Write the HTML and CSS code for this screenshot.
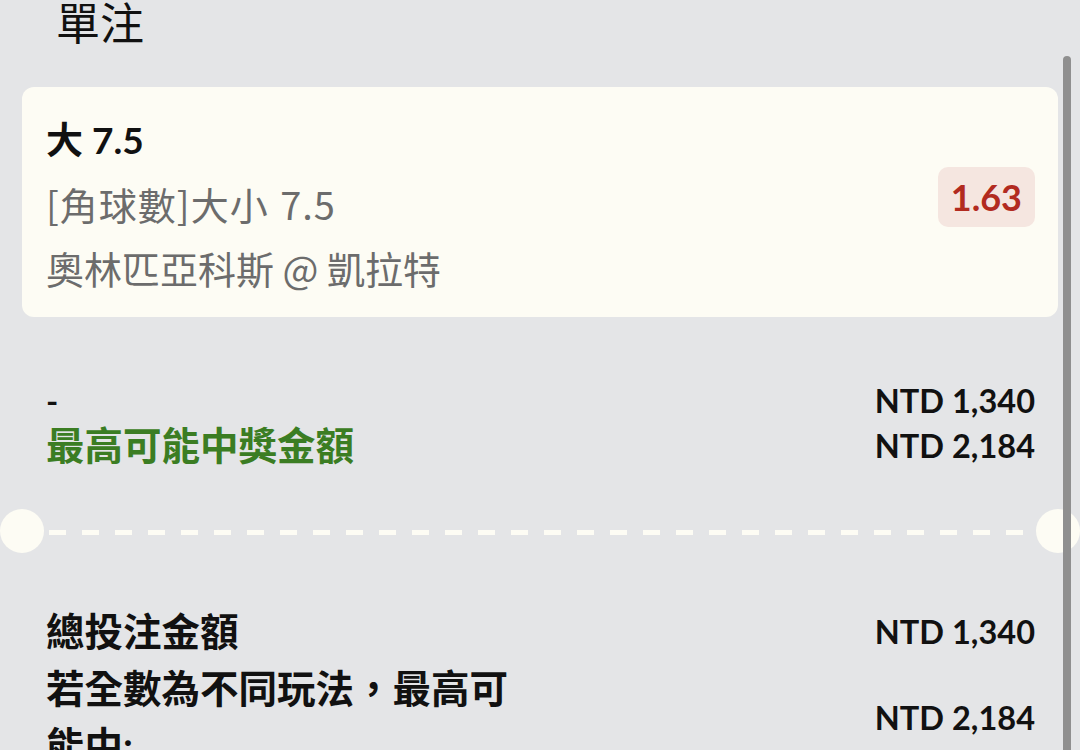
FILE: index.html
```html
<!DOCTYPE html>
<html lang="zh-Hant">
<head>
<meta charset="utf-8">
<link rel="stylesheet" href="styles.css">
</head>
<body>
<div class="page">
  <h1 class="title">單注</h1>
  <div class="card">
    <div class="card-text">
      <div class="pick">大 7.5</div>
      <div class="market">[角球數]大小 7.5</div>
      <div class="match">奧林匹亞科斯 @ 凱拉特</div>
    </div>
    <div class="odds">1.63</div>
  </div>
  <div class="stake-row">
    <div class="stake-labels">
      <div class="dash-label">-</div>
      <div class="win-label">最高可能中獎金額</div>
    </div>
    <div class="amounts">
      <div>NTD 1,340</div>
      <div>NTD 2,184</div>
    </div>
  </div>
  <div class="separator">
    <span class="notch"></span>
    <span class="dashes"></span>
    <span class="notch"></span>
  </div>
  <div class="summary">
    <div class="sum-row">
      <div class="sum-label">總投注金額</div>
      <div class="sum-amount">NTD 1,340</div>
    </div>
    <div class="sum-row">
      <div class="sum-label wrap">若全數為不同玩法，最高可能中:</div>
      <div class="sum-amount">NTD 2,184</div>
    </div>
  </div>
  <div class="scrollbar"></div>
</div>
</body>
</html>
```
FILE: styles.css
```css
html, body {
  margin: 0;
  padding: 0;
  height: 750px;
  overflow: hidden;
}
body {
  background: #e4e5e7;
  font-family: "Lato", "Noto Sans CJK TC", sans-serif;
  color: #111;
  text-spacing-trim: space-all;
}
.page {
  position: relative;
  height: 750px;
}
.title {
  margin: 0;
  padding: 0 0 0 56px;
  font-family: "Noto Sans CJK TC", sans-serif;
  font-weight: 400;
  font-size: 44px;
  line-height: 42px;
  height: 87px;
}
.card {
  margin: 0 22px;
  background: #fdfcf4;
  border-radius: 12px;
  padding: 21px 23px 17px 24px;
  display: flex;
  align-items: center;
  justify-content: space-between;
}
.card-text {
  font-size: 37px;
  line-height: 64px;
}
.pick {
  font-weight: 700;
  color: #111;
}
.market, .match {
  font-family: "Noto Sans CJK TC", sans-serif;
  font-size: 38px;
  color: #6c6c6c;
}
.market {
  letter-spacing: 1px;
  word-spacing: 2px;
}
.odds {
  background: #f5e6e0;
  color: #b22b20;
  font-weight: 700;
  font-size: 36px;
  line-height: 60px;
  padding: 0 13px;
  border-radius: 10px;
  margin-top: -15px;
}
.stake-row {
  display: flex;
  justify-content: space-between;
  padding: 61px 45px 0 46px;
  height: 192px;
  box-sizing: border-box;
  line-height: 45px;
}
.dash-label {
  font-size: 33px;
  font-weight: 700;
}
.win-label {
  font-size: 38.5px;
  font-weight: 700;
  color: #3b7d23;
}
.amounts {
  font-size: 32.5px;
  font-weight: 700;
  text-align: right;
  line-height: 45px;
}
.separator {
  display: flex;
  align-items: center;
  height: 44px;
}
.notch {
  width: 44px;
  height: 44px;
  border-radius: 50%;
  background: #fdfcf4;
  flex: none;
}
.dashes {
  flex: 1;
  height: 5px;
  margin: 2px 4px 0 5px;
  background: repeating-linear-gradient(90deg, #fdfcf4 0 17px, transparent 17px 33px);
}
.summary {
  padding: 50px 45px 0 46px;
}
.sum-row {
  display: flex;
  justify-content: space-between;
  align-items: center;
  font-weight: 700;
}
.sum-label {
  font-size: 38.5px;
  line-height: 57px;
  width: 480px;
}
.sum-amount {
  font-size: 32.5px;
  line-height: 57px;
}
.scrollbar {
  position: absolute;
  left: 1063px;
  top: 56px;
  width: 8px;
  height: 720px;
  border-radius: 4px;
  background: #8f8f8f;
}
```
